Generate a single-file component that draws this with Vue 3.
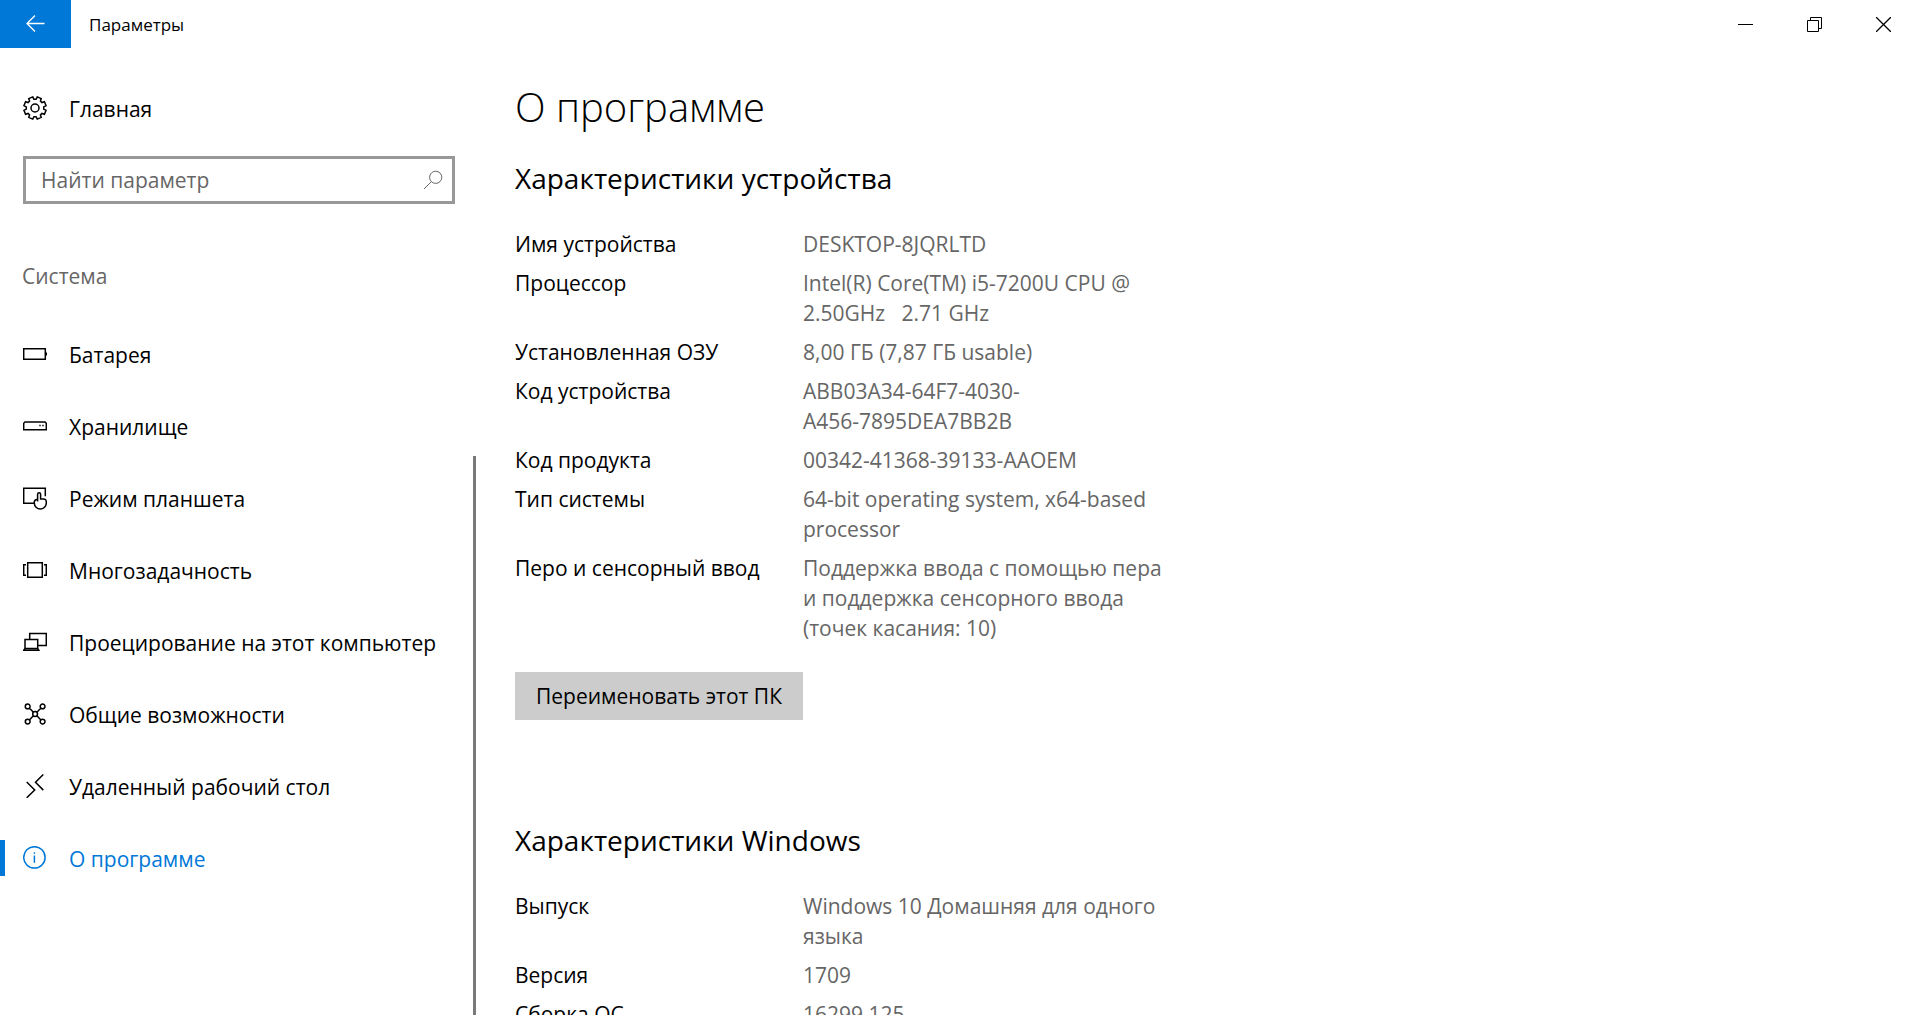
<template>
  <div class="window">
    <header class="titlebar">
      <button class="back" type="button" aria-label="Назад">
        <svg width="20" height="20" viewBox="0 0 20 20">
          <path d="M18.5 9.5H1M9 1.5l-8 8 8 8" />
        </svg>
      </button>
      <span class="app-name">Параметры</span>
      <div class="window-controls">
        <button type="button" aria-label="Свернуть">
          <svg width="15" height="15" viewBox="0 0 15 15"><path d="M0 7.5h15" /></svg>
        </button>
        <button type="button" aria-label="Восстановить">
          <svg width="15" height="15" viewBox="0 0 15 15">
            <path d="M.5 3.5h11v11H.5zM3.5 3.5v-3h11v11h-3" />
          </svg>
        </button>
        <button type="button" aria-label="Закрыть">
          <svg width="15" height="15" viewBox="0 0 15 15" stroke-width="1.3">
            <path d="M0 0l15 15M15 0L0 15" />
          </svg>
        </button>
      </div>
    </header>

    <div class="body">
      <aside class="sidebar">
        <a class="nav-link home" href="#home">
          <svg class="icon" viewBox="0 0 24 24">
            <path
              d="M9.75.93l1.18 2.34h2.14L14.25.93l3.99 1.65-.82 2.49 1.51 1.51 2.49-.82 1.65 3.99-2.34 1.18v2.14l2.34 1.18-1.65 3.99-2.49-.82-1.51 1.51.82 2.49-3.99 1.65-1.18-2.34h-2.14l-1.18 2.34-3.99-1.65.82-2.49-1.51-1.51-2.49.82-1.65-3.99 2.34-1.18v-2.14L.93 9.75l1.65-3.99 2.49.82 1.51-1.51-.82-2.49z"
            />
            <circle cx="12" cy="12" r="4" />
          </svg>
          <span>Главная</span>
        </a>

        <form class="search" @submit.prevent>
          <input v-model="query" type="text" placeholder="Найти параметр" aria-label="Найти параметр" />
          <button type="submit" aria-label="Поиск">
            <svg width="20" height="20" viewBox="0 0 20 20">
              <circle cx="12.7" cy="7.3" r="6.1" />
              <path d="M8.3 11.7L1 19" />
            </svg>
          </button>
        </form>

        <h2 class="group-title">Система</h2>

        <div class="nav-area">
          <nav class="nav">
            <a
              v-for="item in items"
              :key="item.id"
              class="nav-link"
              :class="{ active: item.id === current }"
              :href="'#' + item.id"
              @click.prevent="current = item.id"
            >
              <svg class="icon" viewBox="0 0 24 24">
                <path :d="item.icon" />
              </svg>
              <span>{{ item.label }}</span>
            </a>
          </nav>
          <div class="scroll-thumb" />
        </div>
      </aside>

      <main class="content">
        <h1>О программе</h1>

        <section class="block">
          <h2>Характеристики устройства</h2>
          <dl class="specs">
            <div v-for="row in device" :key="row.name" class="spec">
              <dt>{{ row.name }}</dt>
              <dd>{{ row.value }}</dd>
            </div>
          </dl>
          <button class="rename" type="button">Переименовать этот ПК</button>
        </section>

        <section class="block">
          <h2>Характеристики Windows</h2>
          <dl class="specs">
            <div v-for="row in windows" :key="row.name" class="spec">
              <dt>{{ row.name }}</dt>
              <dd>{{ row.value }}</dd>
            </div>
          </dl>
        </section>
      </main>
    </div>
  </div>
</template>

<script setup>
import { ref } from 'vue'

const query = ref('')
const current = ref('about')

const items = [
  {
    id: 'battery',
    label: 'Батарея',
    icon: 'M.7 6.7h21.6v10.6H.7zM23.3 10.5v3'
  },
  {
    id: 'storage',
    label: 'Хранилище',
    icon: 'M2 8h20l1.3 1.3v6.4H.7V9.3zM16.3 11.5h1.4M19.3 11.5h1.4'
  },
  {
    id: 'tablet',
    label: 'Режим планшета',
    icon: 'M11 17.3H.7V2.3h21.6v8M14.6 15.5V8.2a1.5 1.5 0 0 1 3 0V13h3.2q2.5.3 2.5 2.6V17a6 6 0 0 1-12 0v-1.2q.2-2.2 3.3-2.6'
  },
  {
    id: 'multitasking',
    label: 'Многозадачность',
    icon: 'M4.7 4.7h14.6v14.6H4.7zM3 6.7H.7v10.6H3M21 6.7h2.3v10.6H21'
  },
  {
    id: 'project',
    label: 'Проецирование на этот компьютер',
    icon: 'M6.7 9V3.6h16.6v12H15M2 9.6h12.7v8.8H2zM2 18.4L.7 20.3h15.1l-1.1-1.9'
  },
  {
    id: 'shared',
    label: 'Общие возможности',
    icon:
      'M2.3 4.4a2.4 2.4 0 1 0 4.8 0a2.4 2.4 0 1 0-4.8 0M17.2 4.4a2.4 2.4 0 1 0 4.8 0a2.4 2.4 0 1 0-4.8 0' +
      'M2.3 19.6a2.4 2.4 0 1 0 4.8 0a2.4 2.4 0 1 0-4.8 0M17.2 19.6a2.4 2.4 0 1 0 4.8 0a2.4 2.4 0 1 0-4.8 0' +
      'M9.7 12a2.4 2.4 0 1 0 4.8 0a2.4 2.4 0 1 0-4.8 0M6.4 6.1l4 4.2M17.9 6.1l-4 4.2M6.4 17.9l4-4.2M17.9 17.9l-4-4.2'
  },
  {
    id: 'remote',
    label: 'Удаленный рабочий стол',
    icon: 'M20.3.5l-7.8 7.8 7.8 7.8M3.7 8l8 8-8 7.8'
  },
  {
    id: 'about',
    label: 'О программе',
    icon: 'M.7 11.4a10.7 10.7 0 1 0 21.4 0a10.7 10.7 0 1 0-21.4 0M11.4 6.2v1.6M11.4 9.6v7.2'
  }
]

const device = [
  { name: 'Имя устройства', value: 'DESKTOP-8JQRLTD' },
  { name: 'Процессор', value: 'Intel(R) Core(TM) i5-7200U CPU @ 2.50GHz\u00a0\u00a0 2.71 GHz' },
  { name: 'Установленная ОЗУ', value: '8,00 ГБ (7,87 ГБ usable)' },
  { name: 'Код устройства', value: 'ABB03A34-64F7-4030-\nA456-7895DEA7BB2B' },
  { name: 'Код продукта', value: '00342-41368-39133-AAOEM' },
  { name: 'Тип системы', value: '64-bit operating system, x64-based processor' },
  { name: 'Перо и сенсорный ввод', value: 'Поддержка ввода с помощью пера и поддержка сенсорного ввода (точек касания: 10)' }
]

const windows = [
  { name: 'Выпуск', value: 'Windows 10 Домашняя для одного языка' },
  { name: 'Версия', value: '1709' },
  { name: 'Сборка ОС', value: '16299.125' }
]
</script>

<style>
body {
  margin: 0;
  background: #fff;
}
</style>

<style scoped>
.window {
  display: flex;
  flex-direction: column;
  height: 100vh;
  overflow: hidden;
  color: #000;
  font-family: 'Open Sans', 'Noto Sans', sans-serif;
  font-size: 21px;
  line-height: 30px;
}
h1,
h2,
dl,
dd {
  margin: 0;
  font-weight: 400;
}
button,
input {
  padding: 0;
  border: none;
  border-radius: 0;
  background: none;
  color: inherit;
  font: inherit;
}
svg {
  display: block;
  fill: none;
  stroke: currentColor;
}

/* title bar */
.titlebar {
  display: flex;
  align-items: center;
  flex: none;
  height: 48px;
}
.back {
  display: grid;
  place-items: center;
  width: 71px;
  height: 48px;
  background: #0078d7;
  color: #fff;
  stroke-width: 1.3;
}
.app-name {
  padding-top: 2px;
  margin-left: 18px;
  font-size: 17px;
}
.window-controls {
  display: flex;
  margin-left: auto;
  padding-right: 1px;
}
.window-controls button {
  display: grid;
  place-items: center;
  width: 69px;
  height: 48px;
}

.body {
  display: flex;
  flex: 1;
  min-height: 0;
}

/* sidebar */
.sidebar {
  display: flex;
  flex-direction: column;
  flex: none;
  width: 476px;
}
.nav-link {
  display: flex;
  align-items: center;
  height: 72px;
  padding-left: 23px;
  gap: 22px;
  color: #000;
  text-decoration: none;
  white-space: nowrap;
}
.nav-link span {
  padding-top: 2px;
}
.icon {
  flex: none;
  width: 24px;
  height: 24px;
  stroke-width: 1.5;
}
.home {
  margin-top: 24px;
}
.search {
  display: flex;
  align-items: center;
  box-sizing: border-box;
  height: 48px;
  margin: 12px 21px 0 23px;
  border: 3px solid #999;
}
.search input {
  flex: 1;
  min-width: 0;
  padding-left: 15px;
  outline: none;
}
.search input::placeholder {
  color: #666;
  opacity: 1;
}
.search button {
  display: grid;
  place-items: center;
  width: 38px;
  height: 42px;
  color: #666;
}
.group-title {
  margin: 57px 0 0 22px;
  color: #666;
  font-size: 21px;
}
.nav-area {
  display: flex;
  flex: 1;
  min-height: 0;
  margin-top: 27px;
}
.nav {
  flex: 1;
}
.active {
  color: #0078d7;
  background: linear-gradient(#0078d7, #0078d7) left center / 5px 36px no-repeat;
}
.scroll-thumb {
  width: 3px;
  margin-top: 138px;
  background: #7a7a7a;
}

/* page */
.content {
  flex: 1;
  min-width: 0;
  padding: 32px 24px 0 39px;
}
.content h1 {
  margin-bottom: 24px;
  font-size: 40px;
  font-weight: 300;
  line-height: 54px;
}
.content h2 {
  margin-bottom: 31px;
  font-size: 28px;
  line-height: 40px;
}
.block {
  margin-bottom: 100px;
}
.specs {
  display: grid;
  gap: 9px;
}
.spec {
  display: grid;
  grid-template-columns: 288px minmax(0, 372px);
}
dt {
  white-space: nowrap;
}
dd {
  color: #666;
  white-space: pre-line;
}
.rename {
  height: 48px;
  margin-top: 29px;
  padding: 0 21px;
  background: #ccc;
}
</style>
